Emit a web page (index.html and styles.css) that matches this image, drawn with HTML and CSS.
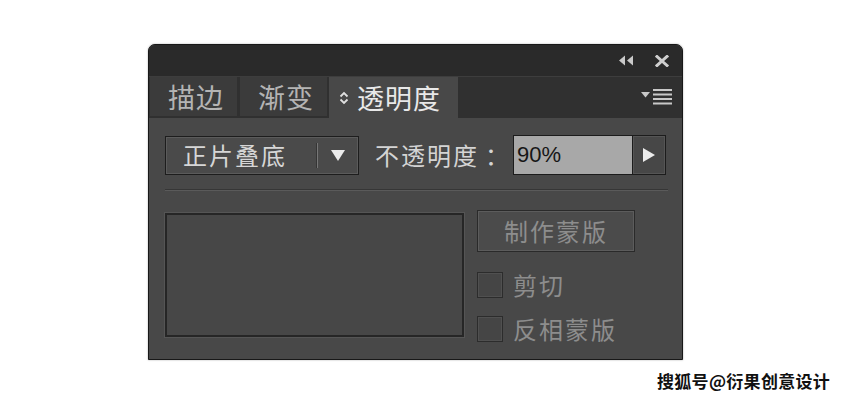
FILE: index.html
```html
<!DOCTYPE html>
<html lang="zh">
<head>
<meta charset="utf-8">
<title>透明度</title>
<link rel="stylesheet" href="styles.css">
</head>
<body>
<div class="page">
  <div class="panel">
    <div class="titlebar">
      <svg class="ico-collapse" width="15" height="11" viewBox="0 0 15 11"><polygon points="0,5.5 6,0.5 6,10.5" /><polygon points="8,5.5 14,0.5 14,10.5" /></svg>
      <svg class="ico-close" width="14" height="12" viewBox="0 0 14 12"><path d="M2 1.5 L12 10.5 M12 1.5 L2 10.5" /></svg>
    </div>
    <div class="tabbar">
      <div class="tab tab-stroke">描边</div>
      <div class="tab tab-grad">渐变</div>
      <div class="tab tab-active">
        <svg class="ico-updown" width="10" height="14" viewBox="0 0 10 14"><path d="M1.5 5.5 L5 2 L8.5 5.5 M1.5 8.5 L5 12 L8.5 8.5" /></svg>
        <span>透明度</span>
      </div>
      <div class="menu">
        <svg width="32" height="18" viewBox="0 0 32 18"><polygon class="tri" points="0,4 9,4 4.5,9.5" /><rect x="12" y="1" width="19" height="2" /><rect x="12" y="5.5" width="19" height="2" /><rect x="12" y="10" width="19" height="2" /><rect x="12" y="14.5" width="19" height="2" /></svg>
      </div>
    </div>
    <div class="content">
      <div class="row1">
        <div class="select">
          <span class="select-text">正片叠底</span>
          <span class="select-sep"></span>
          <span class="select-arrow"><svg width="14" height="11" viewBox="0 0 14 11"><polygon points="0,0 14,0 7,11" /></svg></span>
        </div>
        <div class="label">不透明度<span class="colon">：</span></div>
        <div class="input">90%</div>
        <div class="stepper"><svg width="12" height="14" viewBox="0 0 12 14"><polygon points="0,0 12,7 0,14" /></svg></div>
      </div>
      <div class="divider"></div>
      <div class="row2">
        <div class="preview"></div>
        <div class="side">
          <div class="btn">制作蒙版</div>
          <div class="check"><span class="box"></span><span class="check-label">剪切</span></div>
          <div class="check"><span class="box"></span><span class="check-label">反相蒙版</span></div>
        </div>
      </div>
    </div>
  </div>
  <div class="watermark">搜狐号@衍果创意设计</div>
</div>
</body>
</html>
```
FILE: styles.css
```css
* { box-sizing: border-box; }
html, body { margin: 0; padding: 0; background: #ffffff; }
body {
  width: 850px;
  height: 400px;
  overflow: hidden;
  font-family: "Noto Sans CJK SC", "Noto Sans", sans-serif;
}
.page {
  padding: 44px 0 0 148px;
}
.panel {
  width: 535px;
  height: 316px;
  border: 1px solid #181818;
  border-radius: 7px 7px 0 0;
  background: #484848;
  display: flex;
  flex-direction: column;
  overflow: hidden;
  box-shadow: 0 0 2px rgba(0,0,0,0.35);
}
.titlebar {
  height: 31px;
  flex: none;
  background: #2a2a2a;
  display: flex;
  justify-content: flex-end;
  align-items: center;
  gap: 21px;
  padding-right: 13px;
}
.ico-collapse polygon { fill: #c9c9c9; }
.ico-close path { stroke: #cfcfcf; stroke-width: 3; stroke-linecap: square; fill: none; }
.tabbar {
  height: 42px;
  flex: none;
  background: #303030;
  border-top: 1px solid #3d3d3d;
  display: flex;
  align-items: stretch;
  padding-left: 1px;
}
.tab {
  display: flex;
  align-items: center;
  font-size: 27px;
  letter-spacing: 1px;
  line-height: 1;
  color: #b4b4b4;
  background: #3b3b3b;
  margin-bottom: 2px;
}
.tab-stroke { width: 87px; padding-left: 18px; margin-right: 3px; }
.tab-grad { width: 87px; padding-left: 18px; margin-right: 2px; }
.tab-active {
  width: 129px;
  margin-bottom: 0;
  background: #484848;
  color: #e8e8e8;
  padding-left: 10px;
  gap: 8px;
}
.ico-updown path { stroke: #e0e0e0; stroke-width: 1.8; fill: none; }
.menu {
  margin-left: auto;
  display: flex;
  align-items: center;
  padding-right: 9px;
  padding-bottom: 2px;
}
.menu rect, .menu polygon { fill: #c8c8c8; }
.content {
  flex: 1;
  padding: 17px 14px 0 16px;
  display: flex;
  flex-direction: column;
}
.row1 {
  display: flex;
  align-items: center;
  height: 40px;
}
.select {
  width: 194px;
  height: 39px;
  border: 1px solid #1d1d1d;
  box-shadow: inset 0 0 0 1px #5b5b5b;
  background: #4a4a4a;
  display: flex;
  align-items: center;
  padding-left: 17px;
}
.select-text, .label, .btn, .check-label {
  font-size: 24px;
  letter-spacing: 2px;
  line-height: 1;
}
.select-text { color: #d6d6d6; }
.select-sep {
  margin-left: auto;
  width: 1px;
  height: 25px;
  background: #777;
  box-shadow: -1px 0 0 #353535;
}
.select-arrow {
  width: 40px;
  display: flex;
  justify-content: center;
}
.select-arrow polygon { fill: #ececec; }
.label {
  color: #d4d4d4;
  margin-left: 16px;
  width: 130px;
  white-space: nowrap;
}
.colon { margin-left: 6px; }
.input {
  margin-left: 8px;
  width: 120px;
  height: 40px;
  background: #a8a8a8;
  border: 1px solid #1c1c1c;
  font-family: "Liberation Sans", Arial, sans-serif;
  font-size: 22px;
  color: #161616;
  display: flex;
  align-items: center;
  padding-left: 3px;
}
.stepper {
  width: 33px;
  height: 40px;
  background: #474747;
  border: 1px solid #1c1c1c;
  border-left: none;
  box-shadow: inset 0 0 0 1px #555;
  display: flex;
  align-items: center;
  justify-content: center;
}
.stepper polygon { fill: #ececec; }
.divider {
  margin-top: 14px;
  height: 2px;
  border-top: 1px solid #363636;
  border-bottom: 1px solid #5a5a5a;
}
.row2 {
  margin-top: 19px;
  display: flex;
  align-items: flex-start;
}
.preview {
  margin-top: 3px;
  width: 299px;
  height: 124px;
  border: 2px solid #262626;
  box-shadow: 0 0 0 1px #555;
  background: #474747;
}
.side {
  margin-left: 13px;
  display: flex;
  flex-direction: column;
}
.btn {
  width: 158px;
  height: 42px;
  border: 1px solid #2a2a2a;
  box-shadow: inset 0 0 0 1px #5c5c5c;
  background: #4b4b4b;
  color: #8d8d8d;
  display: flex;
  align-items: center;
  justify-content: center;
  margin-bottom: 20px;
}
.check {
  display: flex;
  align-items: center;
  height: 26px;
  margin-bottom: 18px;
  gap: 10px;
}
.box {
  width: 26px;
  height: 26px;
  border: 1px solid #2c2c2c;
  box-shadow: inset 0 0 0 1px #505050;
  background: #454545;
}
.check-label { color: #8d8d8d; }
.watermark {
  margin-top: 10px;
  padding-left: 509px;
  font-size: 17px;
  line-height: 22px;
  font-weight: bold;
  color: #111;
  letter-spacing: 0.3px;
}
```
